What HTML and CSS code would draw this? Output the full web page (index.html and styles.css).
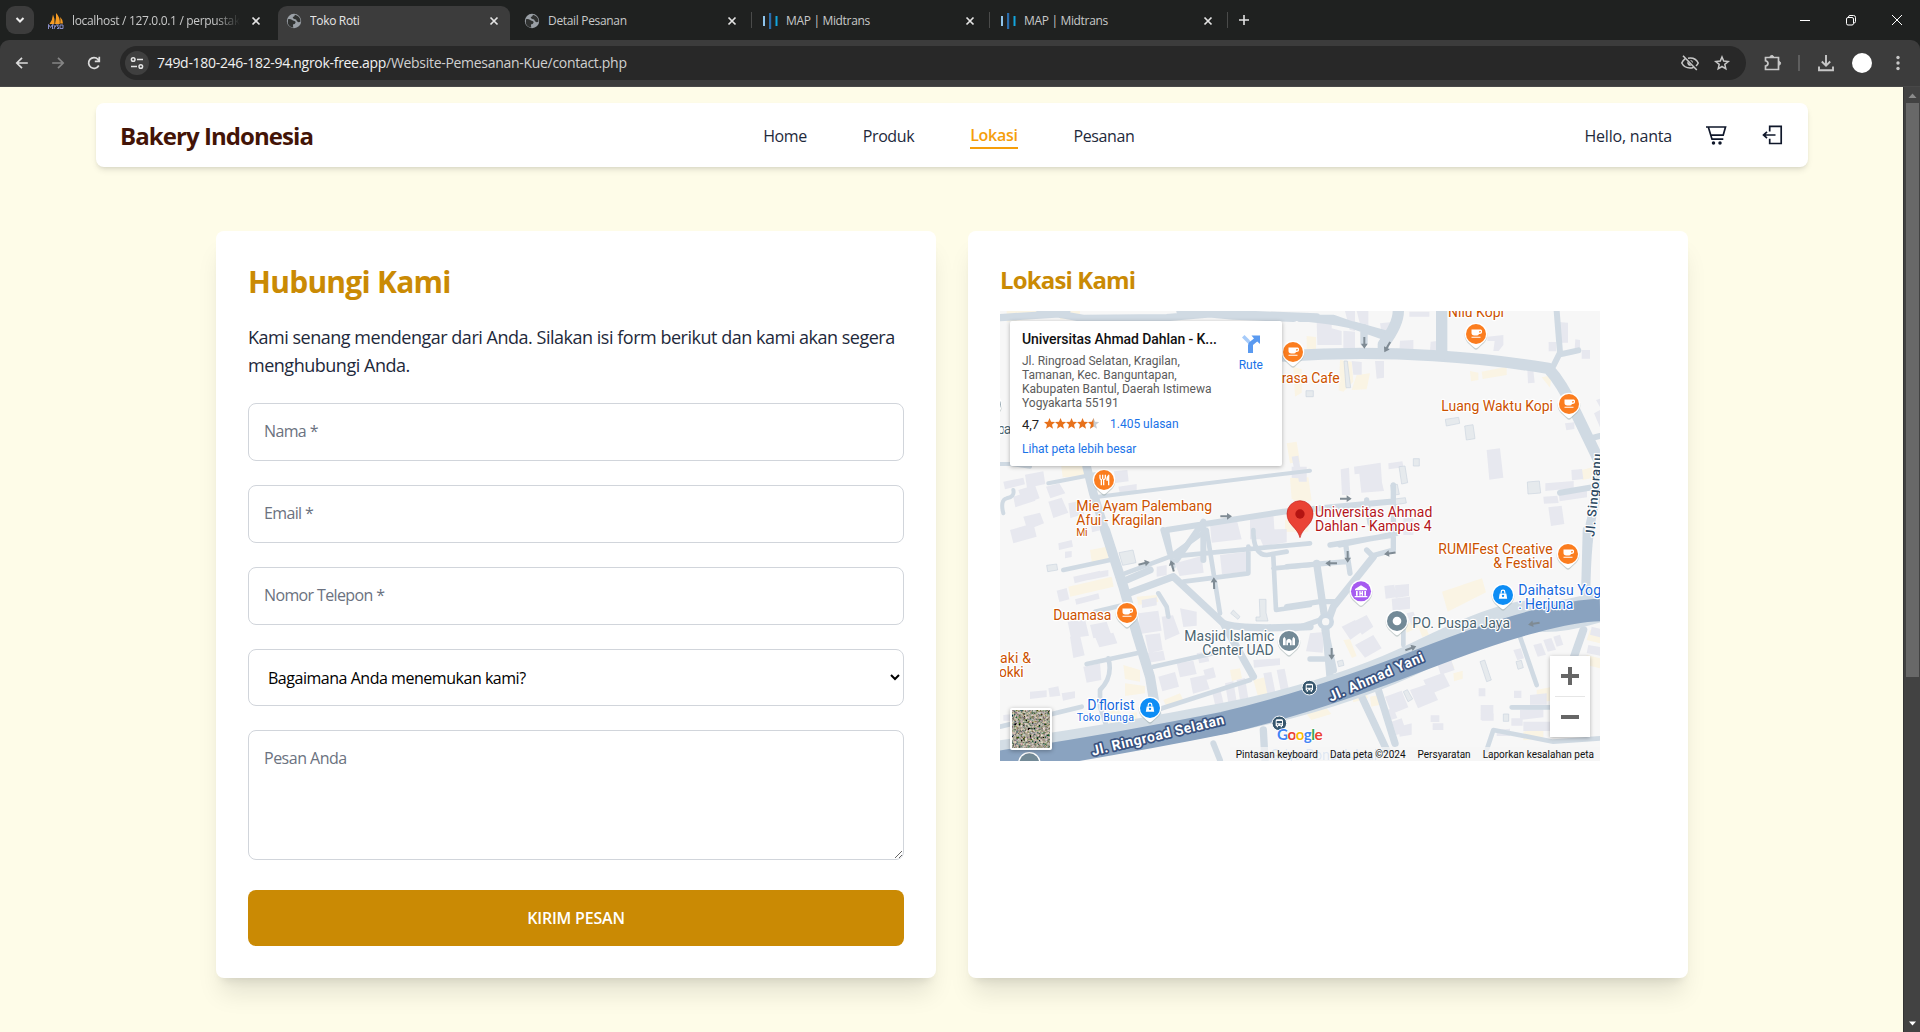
FILE: index.html
```html
<!DOCTYPE html>
<html lang="id">
<head>
<meta charset="utf-8">
<title>Toko Roti</title>
<link rel="stylesheet" href="styles.css">
</head>
<body>
<svg class="defs" aria-hidden="true">
  <defs>
    <symbol id="x" viewBox="0 0 16 16"><path d="M4.500 4.500l7 7M11.500 4.500l-7 7" stroke="#e3e3e3" stroke-width="1.700" fill="none"/></symbol>
    <symbol id="globe" viewBox="0 0 16 16"><circle cx="8" cy="8" r="7.200" fill="#9aa0a6"/><path d="M2 6.200q2.600-.4 3.800.6 1 .9 2.700 1.100 1.600.4 1 1.900-.7 1.600-2.300 1.500-.6 1.500.2 3.300Q3 14 1.800 10.200zM9 1.800q-.6 2.200-2.300 2.300 0 1.600 1.600 2 2.200.2 2.600 2 .8 1.500 2.700.9l1-.6Q14.200 3.200 9 1.800z" fill="#303231"/></symbol>
    <symbol id="mid" viewBox="0 0 16 16"><path d="M1 3h2v10H1z" fill="#8fc4ea"/><path d="M7 0h2.200v16H7z" fill="#2a6cab"/><path d="M13.500 3h2v10h-2z" fill="#12a5dc"/></symbol>
    <symbol id="pin" viewBox="-40 -40 80 100"><path d="M-34 0a34 34 0 1 1 68 0c0 20-16 28-28 40q-6 6-12 0C-18 28-34 20-34 0z" fill="#9aa" opacity=".5" transform="translate(0 4)"/><path d="M-34 0a34 34 0 1 1 68 0c0 20-16 28-28 40q-6 6-12 0C-18 28-34 20-34 0z" fill="#fff"/><circle r="30" fill="currentColor"/></symbol>
    <symbol id="cup" viewBox="-20 -20 40 40"><path d="M-15-14H16q4 0 4 5v4q0 6-8 6h-2q-2 5-7 5h-9q-9 0-9-9zM11-9v6q5 0 5-4v-2zM-15 10h30v4h-30z" fill="#fff" fill-rule="evenodd"/></symbol>
    <symbol id="bag" viewBox="-20 -20 40 40"><path d="M-11-3H11L14 15H-14z" fill="#fff"/><path d="M-6-3v-5a6 6 0 0 1 12 0v5" fill="none" stroke="#fff" stroke-width="4"/><circle cy="5" r="4" fill="#0d8df5"/></symbol>
    <symbol id="arr" viewBox="-20 -11 40 22"><path d="M-17-3H3v-7L18 0 3 10V3h-20z" fill="#7f8b94"/></symbol>
    <symbol id="bus" viewBox="-24 -24 48 48"><circle r="22" fill="#36566d" stroke="#fff" stroke-width="3"/><path d="M-11-8q0-4 5-4H6q5 0 5 4V8H8v4H4V8H-4v4H-8V8h-3z" fill="#fff"/><path d="M-8-7H8v7H-8zM-7 3h4v3h-4zM3 3h4v3H3z" fill="#36566d"/></symbol>
    <filter id="ground" x="0" y="0" width="1" height="1"><feTurbulence type="fractalNoise" baseFrequency=".45" numOctaves="3" seed="8"/><feColorMatrix values="1.300 .3 .2 0 -.53  .9 .6 .2 0 -.5  .8 .3 .5 0 -.52  0 0 0 0 1"/></filter>
  </defs>
</svg>

<header class="tabs">
  <div class="tab-search"><svg width="12" height="12" viewBox="0 0 12 12"><path d="M2.500 4l3.500 3.500L9.500 4" fill="none" stroke="#eee" stroke-width="2"/></svg></div>
  <div class="tab sep-none">
    <svg class="fav" viewBox="0 0 16 16"><path d="M1.500 11Q4.500 7 5 1.500 7.200 6 6.500 11zM7 11Q8.500 5 8 0 12.300 4 11.800 11zM12.200 10.500q.5-3 0-6.500 3 3 2.800 6.500z" fill="#f59b23"/><path d="M.5 16v-4.500l2 3 2-3V16m1-4.500 1.500 2.500L8.500 11.500m-2.500 4.500 1-2.500m2 2h2l-2-3.500h2m1 0h3v3.500h-3zm0 0" stroke="#8b90cc" fill="none"/></svg>
    <span class="tab-title fade">localhost / 127.0.0.1 / perpustak</span><svg class="close"><use href="#x"/></svg>
  </div>
  <div class="tab active"><svg class="fav"><use href="#globe"/></svg><span class="tab-title">Toko Roti</span><svg class="close"><use href="#x"/></svg></div>
  <div class="tab"><svg class="fav"><use href="#globe"/></svg><span class="tab-title">Detail Pesanan</span><svg class="close"><use href="#x"/></svg></div>
  <div class="tab"><svg class="fav"><use href="#mid"/></svg><span class="tab-title">MAP | Midtrans</span><svg class="close"><use href="#x"/></svg></div>
  <div class="tab"><svg class="fav"><use href="#mid"/></svg><span class="tab-title">MAP | Midtrans</span><svg class="close"><use href="#x"/></svg></div>
  <svg class="plus" viewBox="0 0 16 16"><path d="M8 3v10M3 8h10" stroke="#e3e3e3" stroke-width="1.600"/></svg>
  <div class="win">
    <svg viewBox="0 0 16 16"><path d="M3 8.500h10" stroke="#fff"/></svg>
    <svg viewBox="0 0 16 16" fill="none" stroke="#fff"><rect x="3.500" y="5.500" width="7" height="7.500" rx="1.500"/><path d="M5.500 5.500V5q0-1.500 1.500-1.500h3.500Q12.500 3.500 12.500 5.500v4q0 1.500-1.500 1.500h-.5"/></svg>
    <svg viewBox="0 0 16 16"><path d="M3 3l10 10M13 3L3 13" stroke="#fff"/></svg>
  </div>
</header>

<div class="toolbar">
  <svg class="ti" viewBox="0 0 20 20" fill="none" stroke="#dcdcdc" stroke-width="1.700"><path d="M15.800 10H5M10 4.800L4.800 10l5.200 5.200"/></svg>
  <svg class="ti" viewBox="0 0 20 20" fill="none" stroke="#858585" stroke-width="1.700"><path d="M4.200 10H15M10 4.800l5.200 5.200-5.200 5.200"/></svg>
  <svg class="ti" viewBox="0 0 20 20" fill="none" stroke="#dcdcdc" stroke-width="1.700"><path d="M14.800 12.500A5.400 5.400 0 1 1 14 6.300L15.300 8M15.300 3.800V8.300H10.800"/></svg>
  <div class="omni">
    <span class="chip"><svg width="14" height="14" viewBox="0 0 14 14" fill="none" stroke="#e3e3e3" stroke-width="1.500"><circle cx="3.200" cy="3.500" r="1.800"/><path d="M7 3.500h6M1 10.500h6"/><circle cx="10.800" cy="10.500" r="1.800"/></svg></span>
    <span class="url">749d-180-246-182-94.ngrok-free.app<span class="path">/Website-Pemesanan-Kue/contact.php</span></span>
    <svg class="ti" viewBox="0 0 20 20" fill="none" stroke="#c7c7c7" stroke-width="1.600"><path d="M5 5.800Q2.800 7.300 1.800 10q2.500 5 8.200 5 1.800 0 3.300-.6M8 5.200q7.200-1.300 10.200 4.800-.8 1.800-2.200 3M3 2.800L16.800 17"/><path d="M7.500 8.500a3 3 0 0 0 4 4zM10 7a3 3 0 0 1 3 3z" fill="#c7c7c7" stroke="none"/></svg>
    <svg class="ti" viewBox="0 0 20 20" fill="none" stroke="#c7c7c7" stroke-width="1.500"><path d="M10 4l1.700 4.100 4.500.4-3.400 2.900 1 4.400L10 13.500l-3.800 2.300 1-4.400-3.400-2.900 4.500-.4z"/></svg>
  </div>
  <svg class="ti" viewBox="0 0 20 20" fill="none" stroke="#c7c7c7" stroke-width="1.700"><path d="M3.500 4.500h13v12h-13v-3.500q2.500-.5 2.500-2.500T3.500 7.800z"/><path d="M8 4.200a1.800 1.800 0 0 1 3.600 0zM16.800 8.500a1.800 1.800 0 0 1 0 3.600z" fill="#c7c7c7" stroke-width="1"/></svg>
  <i class="vbar"></i>
  <svg class="ti" viewBox="0 0 20 20" fill="none" stroke="#c7c7c7" stroke-width="1.900"><path d="M10 2v10.500M5.800 8.500L10 12.700l4.200-4.200M3 13.500v3.700h14v-3.700"/></svg>
  <i class="avatar"></i>
  <svg class="ti" viewBox="0 0 20 20" fill="#c7c7c7"><circle cx="10" cy="4.500" r="1.700"/><circle cx="10" cy="10" r="1.700"/><circle cx="10" cy="15.500" r="1.700"/></svg>
</div>

<div class="view">
  <main class="page">
    <nav class="navbar">
      <a class="brand">Bakery Indonesia</a>
      <div class="links"><a>Home</a><a>Produk</a><a class="current">Lokasi</a><a>Pesanan</a></div>
      <div class="user">
        <span>Hello, nanta</span>
        <svg width="24" height="24" viewBox="0 0 24 24" fill="none" stroke="#0f172a" stroke-width="1.700"><path d="M2 4h19.500l-2.300 8.200H7.500M4.300 4l3.700 12.200H19.300"/><circle cx="9.500" cy="20" r=".9" fill="#0f172a"/><circle cx="16" cy="20" r=".9" fill="#0f172a"/></svg>
        <svg width="24" height="24" viewBox="0 0 24 24" fill="none" stroke="#0f172a" stroke-width="1.700"><path d="M9.700 8.500V3.300h11.500v17.200H9.700v-4.800M15.500 12H3.500M7 8.800L3.500 12 7 15.200"/></svg>
      </div>
    </nav>

    <div class="cards">
      <section class="card">
        <h1>Hubungi Kami</h1>
        <p class="lead">Kami senang mendengar dari Anda. Silakan isi form berikut dan kami akan segera<br>menghubungi Anda.</p>
        <form class="form">
          <input type="text" placeholder="Nama *">
          <input type="email" placeholder="Email *">
          <input type="tel" placeholder="Nomor Telepon *">
          <select><option>Bagaimana Anda menemukan kami?</option></select>
          <textarea placeholder="Pesan Anda"></textarea>
          <button type="button">KIRIM PESAN</button>
        </form>
      </section>

      <section class="card">
        <h2>Lokasi Kami</h2>
        <div class="map">
          <svg class="canvas" viewBox="0 0 1800 1350">
            <rect width="1800" height="1350" fill="#f7f7f7"/>
            <!-- plots and buildings -->
            <g transform="translate(-30 -33)">
              <path class="y" d="M50 33h100v22l-100 10zM210 33h60v25h-60zM213 492l75-6v42l-70 4zM905 535l50-3 10 70-55 2zM885 660l70-5v40h-70zM890 430l30-5 10 60-30 5z"/>
              <path class="b" d="M105 524l55-10 6 38-55 12zM168 560l40-10 18 30-45 15zM40 545l60-12 5 20-60 15zM85 570l50-15 14 40-50 18zM175 605l40-12 20 45-45 16zM70 590l60-18 6 30-60 20zM100 650l50-12 12 32-50 20zM235 610l40-8 8 40-42 12zM60 690l70-20 10 40-70 20zM372 514l40-4 4 34-40 5zM385 560l55-8v22l-50 8zM905 470l20-3 8 50-18 4zM905 500h45v45h-45zM300 650l40-8 6 45-40 10zM660 672l80-14 15 60-90 10zM780 650l70-12 5 80h-75z"/>
            </g>
            <g transform="translate(870 -33)">
              <path class="y" d="M50 108l28 3v40H50zM150 180l35 5 5 60-30 30-14-4zM200 225l40-5-10 48-45 2zM540 213l25 5v22l-22 4zM575 215l75-15v25l-72 12zM755 232l30-6-5 37zM275 115l18-8 4 38h-20zM10 200l25 8v70l-20 12zM875 510l32-8v32l-30 6zM0 533l25 2 10 60-30 3z"/>
              <path class="b" d="M80 65l45 2v68H82zM125 85l30 8v42h-30zM160 92l35 3v55h-35zM185 183l30 3v38h-25zM255 183h27v50l-22 3zM330 122l40-2v35h-42zM422 125l28-3v30h-30zM358 35h60v15h-60zM270 70l45-5v35h-40zM592 110l48-5v30l-14 18h-16l4-30h-22zM806 66l28 2v60h-26zM776 126h22v28h-22zM856 118l14 2v26h-16zM875 150h25v26h-25zM712 208l18 2 4 38-20 2zM590 450l40-5 10 88-42 6zM152 508l25-5 4 82h-25zM192 500l80-12 4 60 6 25-68 5-6-57-14 2zM295 490l42-6 4 18-45 6zM844 510l32-3 4 30-34 4zM766 550l85-7v22l-85 8zM760 590l42-3 4 22-44 2zM806 580l85-10v22l-82 12zM775 622l40-5 8 55-40 6zM825 370l28-3v20l-24 4zM912 340l18-10v52zM918 300l12-4v25zM340 650l30 5v50h-30zM785 125l12 5v20zM165 33h30v60l-16-4zM200 33h35v65l-20-6z"/>
              <path class="o" d="M466 358l40-6 3 18-40 8zM524 378l25-4 6 42-26 4zM712 546l36-3 4 36-38 3zM370 476h18v22h-18zM327 500l18-2 8 50-18 4zM302 555l20-2 6 30-22 3zM314 597l32-4 3 16-32 5zM48 272h22v18H48zM162 183h10l10 80h-14z"/>
            </g>
            <g transform="translate(-30 657)">
              <path class="y" d="M300 60l50-10 6 40-50 10zM235 170l130-30 6 30-130 30zM400 405l50 15v35l-45-8zM405 460l60 8v22l-60 8zM440 200l60-5 5 20-60 10zM520 510l50-20 10 20-50 20zM355 535l35-4 4 45-36 6zM400 555l40-8 6 40-42 6zM720 420l30-5 6 30-30 8zM790 450l35-8 14 60-32 8z"/>
              <path class="b" d="M200 182l30-8 8 34-30 8zM250 140l80-18 4 18-80 20zM255 208l70-18 4 16-70 18zM295 130l60-10v18l-58 12zM205 40l40-10 4 20-42 10zM225 65l20-2v18l-20 4zM233 275l52-8 12 50-54 8zM240 320l30-4 14 60-34 8zM300 285l50-10 14 40-54 10zM315 320l55-12 12 32-54 12zM280 410l50-10 4 50-44 8zM445 250l60-8 10 60-65 10zM515 260l34-4 20 55-44 20zM570 235l50 10v42l-40 4zM465 315l45-5 8 50-42 10zM555 100l80-22 6 50-72 10zM690 75l80-10 6 60-80 8zM800 0l90-3v40l-70 12zM500 110l30-5v30l-30 5zM120 485l50-4v20l-50 6zM175 475l30-6 6 28-32 4zM215 490l40-6v20l-36 8zM40 555l30-3v20H40zM560 400l50-8 10 40-50 10zM505 440l50-14 12 44-50 14zM600 445l45-10 14 42-50 14zM665 480l25-6 14 60-25 6zM705 460l25-6 10 60-25 5zM740 450l25-6 10 60-25 5zM820 430l24-4 12 60-24 5zM860 420l24-4 12 60-24 5zM790 390l80-5v20l-78 8zM640 420l30-8 8 30-30 8zM470 370l50-8 6 28-50 8zM455 210l45-8v24l-44 8zM620 370l30-6 8 30-30 6z"/>
              <path class="o" d="M170 106l30-4 3 18-30 5zM387 68l42-8 9 38-40 8zM808 208h20v40l6 25h-36v-12h12zM730 240l20 20-6 8-22-18z"/>
            </g>
            <g transform="translate(870 657)">
              <path class="y" d="M456 185l120-40 12 42-115 58zM160 330l20-2 20 50-14 6zM385 290l20-5 12 30-20 6zM450 395l30-10 14 30-30 12zM490 430l28-8v24l-26 8zM180 470l40-15 14 50-44 12zM40 540l60-18 24 30-60 18zM900 300l30 10v30l-40-10zM890 375l40 10v30l-40-10zM740 480l40-8v40l-40 8zM700 605l60-10v30l-60 6zM240 500l30-6v30l-26 6zM345 285l40-18v25l-35 16z"/>
              <path class="b" d="M283 168l30-4 6 38-32 4zM315 166l42-4v36l-40 6zM305 206l55-6v36l-52 6zM60 310l42-4-4 62-50-4zM155 290l40-20 20 35-34 24zM190 275l40-20 20 35-34 24zM195 345l55-30 25 40-50 28zM350 250l20-5 14 32-20 8zM285 500l50-18 20 50-50 20zM360 480l60-20 24 50-60 25zM400 450l60-22 20 40-60 25zM440 395l40-15 14 40-42 14zM305 575l30-10 14 40-30 10zM290 540l20-6 12 30-20 6zM325 590l40-10v34l-36 6zM422 556h26v20h-26zM428 580h32v20h-32zM566 475h20v24h-20zM572 525h38v45h-38zM575 550h36v22h-36zM664 565h34v22h-34zM672 482h22v22h-22zM690 540l70-8v30l-70 8zM620 600l40-4v22h-40zM700 575h80v28h-80zM720 495l50-5v34h-50zM730 345l24-6 14 35-25 6zM760 330l24-6 14 35-25 6zM790 320l20-6 10 30-20 6zM670 360l22-5 10 30-20 6zM905 290l25 6v26l-30-8zM895 345l35 6v26l-40-8z"/>
              <path class="o" d="M570 395l14-5 20 60-14 5zM340 485l12-6 16 28-14 8zM640 552h16v22h-16zM142 394l16-4 4 16-16 4zM678 395l16-4 6 22-16 5z"/>
            </g>
            <!-- streets -->
            <g class="r">
              <path stroke-width="22" d="M0 20L190 8L200 0M120 0L250 22L500 20L640 8L740 10L950 18M900 22H1000L1150 75M850 15Q1000 25 1090 50L1160 70M1092 50V95M540 0L700 15L880 22"/>
              <path stroke-width="34" d="M850 135Q1080 120 1300 134Q1480 145 1645 172Q1685 215 1725 300L1800 455"/>
              <path stroke-width="34" d="M1195 0Q1195 40 1150 100V125M1325 0V130"/>
              <path stroke-width="18" d="M1670 0L1680 125L1660 165M1680 130L1735 118M1780 380L1800 375M1680 545L1800 525"/>
              <path stroke-width="26" d="M1790 560Q1760 650 1758 850M1800 470Q1790 560 1770 640"/>
            </g>
            <g class="r" transform="translate(-30 -33)">
              <path stroke-width="12" d="M30 492H60L120 500M175 550L330 520M325 590L960 512M40 640Q30 600 50 595Q75 590 70 570"/>
              <path stroke-width="26" d="M290 500L310 580L345 690"/>
              <path stroke-width="18" d="M530 690L880 635L1200 605M640 665L560 780M640 665V780M520 690L540 760"/>
            </g>
            <g class="r" transform="translate(-30 657)">
              <path stroke-width="30" d="M345 0L400 170L440 310L480 440L505 590"/>
              <path stroke-width="14" d="M220 120L360 90M405 130L540 80L960 40M540 80L650 0M530 0L550 110M650 0L690 250M580 155L775 130V50M790 0Q790 75 830 75L890 65M850 80L858 240L960 225M850 115L960 105M315 245L400 225M290 402L440 370M355 385Q370 440 330 480V530L350 590M30 590L275 530M490 410L690 365M500 540L780 450M505 190L530 230L535 260M350 590L360 610"/>
              <path stroke-width="22" d="M415 190L550 140L700 280Q740 300 960 290M700 280L790 440M820 600L825 690M410 150L480 120"/>
              <path stroke-width="18" d="M670 640L690 690"/>
            </g>
            <g class="r" transform="translate(870 657)">
              <path stroke-width="22" d="M80 100L105 270L120 440M130 420L105 300L130 230L250 80"/>
              <path stroke-width="16" d="M-10 110L170 95M120 45L310 15V-135M310 20V60L255 75M168 50L180 130M-10 230L90 215H140M60 387H120M250 80L230 60M-10 305L90 270M230 -90L240 -20M150 45L320 10"/>
              <path stroke-width="22" d="M215 500L290 660M265 480L315 640"/>
              <path stroke-width="14" d="M690 320L740 465M665 532H780M590 660L610 600L790 635L930 625M340 345V290"/>
              <path stroke-width="24" d="M880 300L845 400M890 0L885 200"/>
            </g>
            <circle cx="977" cy="932" r="18" fill="#f7f7f7" stroke="#ced9e3" stroke-width="14"/>
            <!-- ring road -->
            <path class="road-side" d="M0 1334Q320 1290 670 1222T1270 1030T1600 915T1800 886"/>
            <path class="road-main" d="M0 1353Q320 1306 670 1236Q930 1176 1270 1044Q1470 966 1600 932T1800 897"/>
            <!-- one-way arrows -->
            <g>
              <use href="#arr" width="40" height="22" transform="translate(1093 95) rotate(90) translate(-20 -11)"/>
              <use href="#arr" width="40" height="22" transform="translate(1162 108) rotate(120) translate(-20 -11)"/>
              <use href="#arr" width="40" height="22" x="1017" y="552"/>
              <use href="#arr" width="40" height="22" x="658" y="605"/>
              <use href="#arr" width="40" height="22" transform="translate(432 757) rotate(-14) translate(-20 -11)"/>
              <use href="#arr" width="40" height="22" transform="translate(517 765) rotate(-105) translate(-20 -11)"/>
              <use href="#arr" width="40" height="22" transform="translate(642 817) rotate(-92) translate(-20 -11)"/>
              <use href="#arr" width="40" height="22" transform="translate(994 757) rotate(180) translate(-20 -11)"/>
              <use href="#arr" width="40" height="22" transform="translate(1043 737) rotate(90) translate(-20 -11)"/>
              <use href="#arr" width="40" height="22" transform="translate(1170 727) rotate(172) translate(-20 -11)"/>
              <use href="#arr" width="40" height="22" transform="translate(995 1028) rotate(90) translate(-20 -11)"/>
              <use href="#arr" width="40" height="22" transform="translate(1232 1012) rotate(-20) translate(-20 -11)"/>
              <use href="#arr" width="40" height="22" transform="translate(1602 938) rotate(170) translate(-20 -11)"/>
            </g>
            <!-- road names -->
            <text class="rn" transform="translate(278 1334) rotate(-13.500)" textLength="408">Jl. Ringroad Selatan</text>
            <text class="rn" transform="translate(992 1172) rotate(-23.500)" textLength="308">Jl. Ahmad Yani</text>
            <text class="rn2" transform="translate(1783 678) rotate(-85)" textLength="250">Jl. Singoranu</text>
            <!-- place labels -->
            <g class="food">
              <text x="1344" y="19" textLength="168">Nilu Kopi</text>
              <text x="845" y="216" textLength="174">rasa Cafe</text>
              <text x="1324" y="301" textLength="335">Luang Waktu Kopi</text>
              <text x="229" y="601" textLength="407">Mie Ayam Palembang</text>
              <text x="229" y="643" textLength="258">Afui - Kragilan</text>
              <text x="229" y="674" textLength="34" class="sm">Mi</text>
              <text x="160" y="927" textLength="174">Duamasa</text>
              <text x="0" y="1056" textLength="93">aki &amp;</text>
              <text x="-3" y="1098" textLength="74">okki</text>
              <text x="1315" y="729" textLength="343">RUMIFest Creative</text>
              <text x="1480" y="771" textLength="179">&amp; Festival</text>
            </g>
            <g class="shop">
              <text x="262" y="1197" textLength="142">D'florist</text>
              <text x="230" y="1230" textLength="172" class="sm">Toko Bunga</text>
              <text x="1555" y="852" textLength="248">Daihatsu Yog</text>
              <text x="1555" y="894" textLength="165">: Herjuna</text>
              <text x="812" y="1346" textLength="320" opacity=".35">Griya Ponsel Jual</text>
            </g>
            <g class="place">
              <text x="-8" y="368" textLength="42">pa</text>
              <text x="553" y="990" textLength="270">Masjid Islamic</text>
              <text x="607" y="1032" textLength="214">Center UAD</text>
              <text x="1237" y="951" textLength="293">PO. Puspa Jaya</text>
            </g>
            <g class="uad">
              <text x="945" y="618" textLength="352">Universitas Ahmad</text>
              <text x="945" y="660" textLength="350">Dahlan - Kampus 4</text>
            </g>
            <!-- pins -->
            <g color="#fb7d1f">
              <use href="#pin" x="839" y="83" width="80" height="100"/><use href="#cup" x="861" y="104" width="36" height="36"/>
              <use href="#pin" x="1388" y="29" width="80" height="100"/><use href="#cup" x="1410" y="50" width="36" height="36"/>
              <use href="#pin" x="1667" y="239" width="80" height="100"/><use href="#cup" x="1689" y="260" width="36" height="36"/>
              <use href="#pin" x="272" y="467" width="80" height="100"/>
              <use href="#pin" x="341" y="866" width="80" height="100"/><use href="#cup" x="363" y="887" width="36" height="36"/>
              <use href="#pin" x="1664" y="689" width="80" height="100"/><use href="#cup" x="1686" y="710" width="36" height="36"/>
            </g>
            <path d="M300 491v9q0 5 4 6v17M308 491v14M316 491v9q0 5-5 6v17M326 491v32" fill="none" stroke="#fff" stroke-width="4"/><path d="M326 491q-8 4-7 18h7z" fill="#fff"/>
            <g color="#0d8df5">
              <use href="#pin" x="410" y="1151" width="80" height="100"/><use href="#bag" x="432" y="1171" width="36" height="36"/>
              <use href="#pin" x="1469" y="812" width="80" height="100"/><use href="#bag" x="1491" y="832" width="36" height="36"/>
            </g>
            <g color="#a65bf0"><use href="#pin" x="1043" y="801" width="80" height="100"/></g>
            <path d="M1065 834l18-11 18 11v4h-36zM1068 840h5v14h-5zM1078 840h4v5h3v-5h4v14h-4v-5h-3v5h-4zM1093 840h5v14h-5zM1064 855h38v4h-38z" fill="#fff"/>
            <g color="#738a97">
              <use href="#pin" x="1151" y="890" width="80" height="100"/>
              <use href="#pin" x="827" y="950" width="80" height="100"/>
              <use href="#pin" x="-68" y="240" width="80" height="100"/>
              <use href="#pin" x="48" y="1317" width="80" height="100"/>
            </g>
            <circle cx="1191" cy="930" r="13" fill="#fff"/>
            <path d="M849 1003v-20l4-6 4 6v20zM859 1003v-14q8-12 16 0v14h-5v-8h-6v8zM877 1003v-20l4-6 4 6v20z" fill="#fff"/>
            <use href="#bus" x="904" y="1106" width="48" height="48"/>
            <use href="#bus" x="814" y="1213" width="48" height="48"/>
            <path d="M900 680C892 648 861 642 861 608a39 39 0 1 1 78 0C939 642 908 648 900 680z" fill="#ea4335" stroke="#c5221f" stroke-width="2"/>
            <circle cx="900" cy="609" r="14" fill="#b31412"/>
            <text x="831" y="1287" class="goog" textLength="137"><tspan fill="#4285f4">G</tspan><tspan fill="#ea4335">o</tspan><tspan fill="#fbbc04">o</tspan><tspan fill="#4285f4">g</tspan><tspan fill="#34a853">l</tspan><tspan fill="#ea4335">e</tspan></text>
          </svg>
          <div class="info">
            <div class="info-main">
              <div class="info-title">Universitas Ahmad Dahlan - K...</div>
              <div class="info-addr">Jl. Ringroad Selatan, Kragilan,<br>Tamanan, Kec. Banguntapan,<br>Kabupaten Bantul, Daerah Istimewa<br>Yogyakarta 55191</div>
              <div class="info-rate"><span class="score">4,7</span>
                <svg width="55" height="12" viewBox="0 0 55 12"><defs><path id="st" d="M5.500 0l1.600 3.800 4 .3L8 6.800l1 4-3.500-2.200L2 10.800l1-4L0 4.100l4-.3z"/></defs><g fill="#e7711b"><use href="#st"/><use href="#st" x="11"/><use href="#st" x="22"/><use href="#st" x="33"/></g><use href="#st" x="44" fill="#c9cdd1"/><path d="M49.500 0v8.600L46 10.800l1-4L44 4.100l4-.3z" fill="#e7711b"/></svg>
                <a>1.405 ulasan</a></div>
              <a>Lihat peta lebih besar</a>
            </div>
            <div class="info-route">
              <svg width="20" height="20" viewBox="0 0 20 20"><path d="M1 3.500L3.500 1 9 6.500v5z" fill="#a6cbfa"/><path d="M7 19V11.500Q7 9.500 8.500 8L13 4.500 10.500 1.500H19V10l-2.800-2.500L12 11v8z" fill="#5a9af0"/></svg>
              <a>Rute</a>
            </div>
          </div>
          <svg class="sat" viewBox="0 0 42 42"><rect width="42" height="42" rx="2" fill="#fff"/><rect x="2" y="2" width="38" height="38" filter="url(#ground)"/></svg>
          <div class="zoom"><span><svg viewBox="0 0 18 18"><path d="M9 0v18M0 9h18" stroke="#666" stroke-width="4"/></svg></span><i></i><span><svg viewBox="0 0 18 18"><path d="M0 9h18" stroke="#666" stroke-width="4"/></svg></span></div>
          <div class="legal"><span>Pintasan keyboard</span><span>Data peta ©2024</span><span>Persyaratan</span><span>Laporkan kesalahan peta</span></div>
        </div>
      </section>
    </div>
  </main>
  <div class="scroll">
    <svg viewBox="0 0 17 16"><path d="M4.500 11L8.500 6.500 12.500 11z" fill="#8b8b8b"/></svg>
    <i></i>
    <svg class="down" viewBox="0 0 17 16"><path d="M5 5.500h7L8.500 9.500z" fill="#fff"/></svg>
  </div>
</div>
</body>
</html>
```
FILE: styles.css
```css
*, *::before, *::after { box-sizing: border-box; }
html, body { margin: 0; height: 100%; overflow: hidden; }
body {
  display: flex;
  flex-direction: column;
  height: 1032px;
  font-family: "Open Sans", "Noto Sans", sans-serif;
  font-size: 16px;
  color: #0f172a;
  background: #1f2120;
}
.defs { position: absolute; width: 0; height: 0; }

/* Tab strip */
.tabs { display: flex; align-items: center; height: 40px; background: #1f2120; flex: none; }
.tab-search {
  width: 28px; height: 28px; margin: 0 6px; border-radius: 9px;
  background: #3c3c3c; display: flex; align-items: center; justify-content: center;
}
.tab {
  position: relative; display: flex; align-items: center; gap: 8px;
  width: 238px; height: 40px; padding: 1px 14px 0 8px;
  font-size: 12px; letter-spacing: -0.33px; color: #c8c9c9;
}
.tab:not(.active):not(.sep-none)::after {
  content: ""; position: absolute; right: 2px; top: 12px; width: 1.500px; height: 16px; background: #4a4b4a;
}
.fav { width: 16px; height: 16px; flex: none; }
.close { width: 16px; height: 16px; flex: none; }
.tab-title { flex: 1; white-space: nowrap; overflow: hidden; }
.fade { -webkit-mask-image: linear-gradient(90deg, #000 85%, transparent 100%); mask-image: linear-gradient(90deg, #000 85%, transparent 100%); }
.active { color: #e6e6e6; }
.active::before {
  content: ""; position: absolute; z-index: 0; left: 0; right: 6px; top: 6px; bottom: 0;
  background: #3c3c3c; border-radius: 9px 9px 0 0;
}
.active > * { position: relative; z-index: 1; }
.plus { width: 16px; height: 16px; margin-left: 6px; }
.win { margin-left: auto; display: flex; gap: 30px; padding-right: 15px; }
.win svg { width: 16px; height: 16px; }

/* Toolbar */
.toolbar {
  display: flex; align-items: center; gap: 16px; height: 47px; flex: none;
  padding: 0 12px; background: #3c3c3c; border-radius: 9px 9px 0 0; border-bottom: 1px solid #484848;
}
.ti { width: 20px; height: 20px; flex: none; }
.omni {
  flex: 1; display: flex; align-items: center; gap: 12px; height: 34px;
  padding: 0 14px 0 5px; border-radius: 17px; background: #282828;
}
.chip {
  width: 24px; height: 24px; border-radius: 50%; background: #3f3f3f; flex: none;
  display: flex; align-items: center; justify-content: center;
}
.url { flex: 1; margin-left: -4px; padding-bottom: 1px; font-size: 14px; letter-spacing: -0.3px; color: #f1f1f1; white-space: nowrap; }
.path { color: #d0d0d0; }
.vbar { width: 2px; height: 16px; background: #5e5e5e; }
.avatar { width: 20px; height: 20px; border-radius: 50%; background: #fff; }

/* Page */
.view { flex: 1; display: flex; min-height: 0; }
.page { flex: 1; background: #fefce8; overflow: hidden; padding-top: 16px; }
.navbar {
  display: flex; align-items: center; justify-content: space-between;
  width: 1712px; height: 64px; margin-left: 96px; padding: 0 24px;
  background: #fff; border-radius: 8px;
  box-shadow: 0 4px 6px -1px rgba(0,0,0,.1), 0 2px 4px -2px rgba(0,0,0,.1);
}
.brand { font-size: 24px; font-weight: 700; color: #431407; letter-spacing: -0.93px; white-space: nowrap; padding-top: 1px; }
.links { display: flex; align-items: center; gap: 56px; font-weight: 500; letter-spacing: -0.4px; }
.links a, .user span { color: #1e293b; padding-top: 1px; }
.links .current { color: #f59e0b; border-bottom: 2px solid #f59e0b; line-height: 24px; padding-top: 2px; font-weight: 600; letter-spacing: -0.3px; }
.user { display: flex; align-items: center; gap: 32px; font-weight: 500; letter-spacing: -0.2px; }

.cards { display: grid; grid-template-columns: 720px 720px; gap: 32px; margin: 64px 0 0 216px; }
.card {
  height: 747px; padding: 32px; background: #fff; border-radius: 8px;
  box-shadow: 0 20px 25px -5px rgba(0,0,0,.1), 0 8px 10px -6px rgba(0,0,0,.1);
}
h1, h2 { margin: 0; font-weight: 700; color: #ca8a04; white-space: nowrap; padding-top: 2px; }
h1 { font-size: 30px; line-height: 34px; letter-spacing: -0.75px; }
h2 { font-size: 24px; line-height: 30px; letter-spacing: -0.85px; }
.lead { margin: 24px 0; font-size: 18px; line-height: 28px; letter-spacing: -0.48px; color: #1e293b; white-space: nowrap; }
.form { display: flex; flex-direction: column; gap: 24px; }
.form > * {
  width: 100%; margin: 0; padding: 15px; border: 1px solid #d1d5db; border-radius: 8px;
  background: #fff; color: #000; font: inherit; letter-spacing: -0.63px; outline: none;
}
.form input { height: 58px; padding-bottom: 17px; }
.form select { height: 57px; letter-spacing: -0.47px; padding-top: 16px; }
.form textarea { height: 130px; resize: vertical; display: block; line-height: 24px; letter-spacing: -0.5px; }
.form ::placeholder { color: #6b7280; opacity: 1; }
.form button { height: 56px; margin-top: 6px; border: 0; background: #ca8a04; color: #fff; font-weight: 600; letter-spacing: -0.2px; }

/* Map */
.map { position: relative; width: 600px; height: 450px; margin-top: 16px; overflow: hidden; font-family: Roboto, sans-serif; }
.canvas { display: block; width: 600px; height: 450px; }
.canvas text { font-size: 42px; paint-order: stroke; stroke: #fff; stroke-width: 7px; stroke-linejoin: round; }
.canvas .sm { font-size: 32px; }
.y { fill: #faf4e4; }
.b { fill: #e7e8ef; }
.o { fill: #e6eaed; stroke: #cbd5e0; stroke-width: 2; }
.r path { fill: none; stroke: #d0dae3; stroke-linecap: round; stroke-linejoin: round; }
.road-side { fill: none; stroke: #d3dde5; stroke-width: 92; }
.road-main { fill: none; stroke: #8aa3c0; stroke-width: 68; }
.food text { fill: #cc5200; }
.shop text { fill: #1568dd; }
.place text { fill: #4c6572; }
.uad text { fill: #b3151b; }
.canvas .rn { font-size: 42px; font-weight: 700; fill: #fff; stroke: #3a5380; stroke-width: 10px; }
.canvas .rn2 { font-size: 38px; font-weight: 500; fill: #2d4a63; }
.canvas .goog { font-family: Lato, sans-serif; font-size: 46px; font-weight: 700; stroke-width: 5px; }
.info {
  position: absolute; left: 10px; top: 10px; width: 272px; height: 145px;
  display: flex; justify-content: space-between; padding: 9px 19px 0 12px;
  background: #fff; border-radius: 2px; box-shadow: 0 1px 4px rgba(0,0,0,.3);
  font-size: 12px; white-space: nowrap;
}
.info a { color: #1a73e8; }
.info-title { font-size: 14px; font-weight: 500; line-height: 18px; color: #111; letter-spacing: -0.08px; }
.info-addr { margin-top: 6px; line-height: 14px; color: #5b5b5b; }
.info-rate { display: flex; align-items: center; height: 14px; margin: 7px 0 11px; }
.score { font-size: 13px; color: #222; width: 22px; }
.info-rate a { margin-left: 11px; }
.info-route { display: flex; flex-direction: column; align-items: center; gap: 4px; padding-top: 4px; }
.sat { position: absolute; left: 10px; bottom: 11px; width: 42px; height: 42px; filter: drop-shadow(0 1px 2px rgba(0,0,0,.3)); }
.zoom {
  position: absolute; right: 10px; top: 345px; width: 40px; height: 81px; background: #fff;
  box-shadow: 0 1px 4px rgba(0,0,0,.3); display: flex; flex-direction: column; align-items: center;
}
.zoom span { flex: 1; display: flex; align-items: center; }
.zoom svg { width: 18px; height: 18px; }
.zoom i { width: 30px; height: 1px; background: #e6e6e6; }
.legal {
  position: absolute; right: 0; bottom: 0; height: 14px; display: flex; gap: 12px; align-items: center;
  padding: 0 6px; font-size: 10px; color: #111; background: rgba(245,245,245,.7); white-space: nowrap;
}

/* Scrollbar */
.scroll { width: 17px; display: flex; flex-direction: column; align-items: center; background: #424242; border-left: 1px solid #333; }
.scroll svg { width: 17px; height: 16px; flex: none; }
.scroll i { width: 13px; height: 574px; background: #686868; }
.scroll .down { margin-top: auto; }
```
